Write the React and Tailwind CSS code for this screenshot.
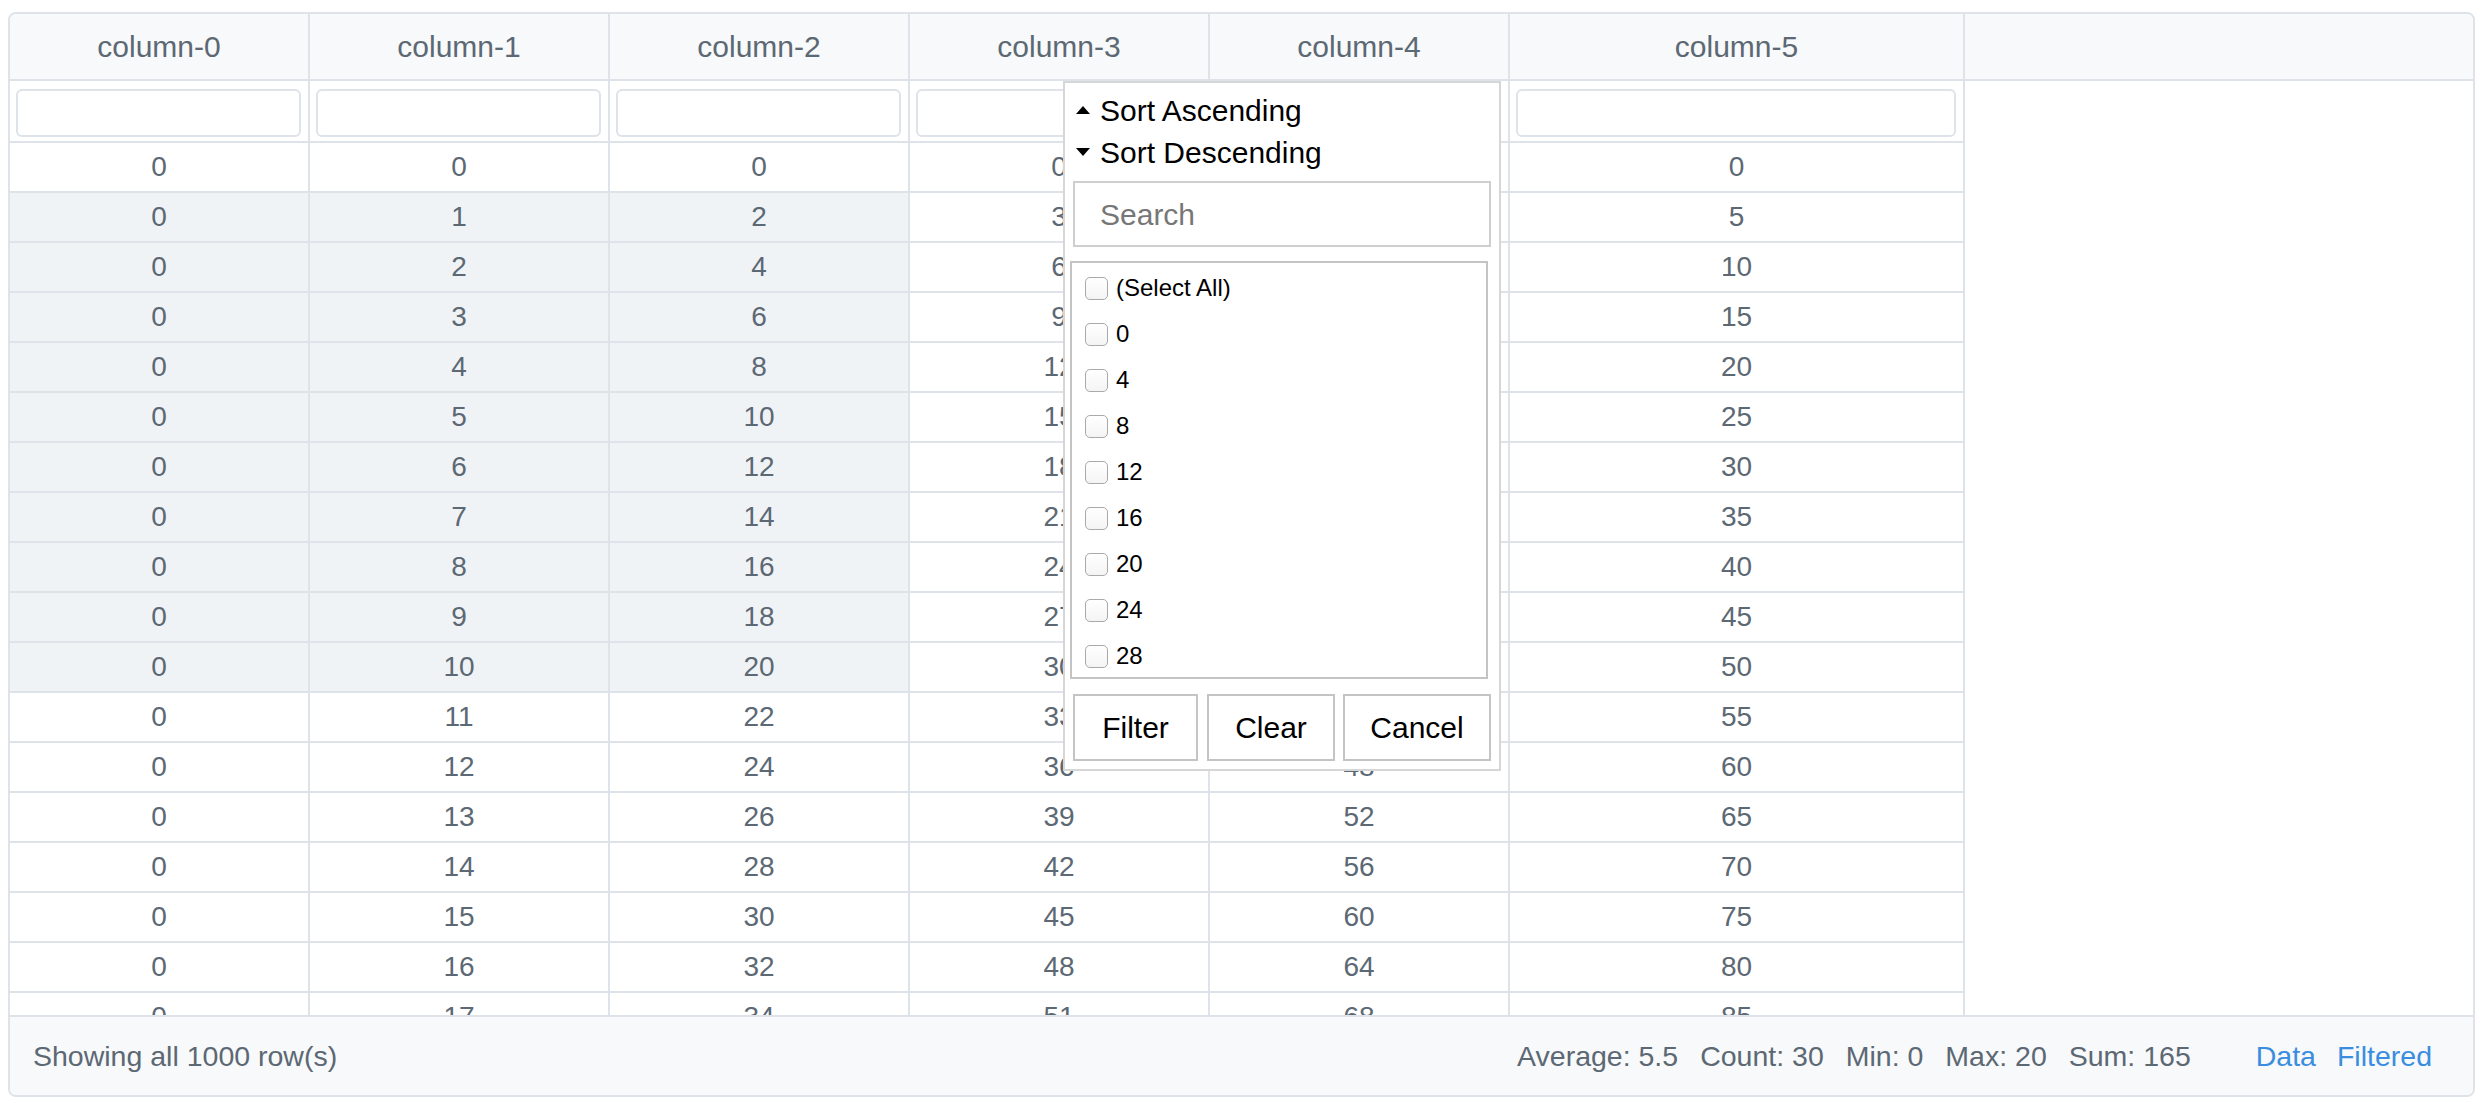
import React from "react";

const columns = ["column-0", "column-1", "column-2", "column-3", "column-4", "column-5"];
const rows = Array.from({ length: 18 }, (_, i) => [0, i, i * 2, i * 3, i * 4, i * 5]);
const listValues = ["(Select All)", "0", "4", "8", "12", "16", "20", "24", "28"];

const colWidth = (idx) => (idx === 5 ? "w-[455px]" : "w-[300px]");

function Checkbox() {
  return (
    <span className="inline-block w-[23px] h-[23px] rounded-[5px] border-[1.5px] border-[#a9a9a9] bg-gradient-to-b from-white to-[#f4f4f4] shrink-0"></span>
  );
}

function FilterPopup() {
  return (
    <div className="absolute left-[1053px] top-[67px] w-[438px] h-[690px] bg-white border-2 border-[#d6d6d6] text-black z-10">
      <div className="pt-[6px] pl-[11px]">
        <div className="h-[42px] flex items-center gap-[10px] text-[30px]">
          <svg width="14" height="8" viewBox="0 0 14 8"><polygon points="7,0 14,8 0,8" fill="#000" /></svg>
          <span>Sort Ascending</span>
        </div>
        <div className="h-[42px] flex items-center gap-[10px] text-[30px]">
          <svg width="14" height="8" viewBox="0 0 14 8"><polygon points="0,0 14,0 7,8" fill="#000" /></svg>
          <span>Sort Descending</span>
        </div>
      </div>
      <div className="mt-[8px] mx-[8px] h-[66px] border-2 border-[#cfcfcf] flex items-center pl-[25px] text-[30px] text-[#777]">
        Search
      </div>
      <div className="mt-[14px] ml-[5px] w-[418px] h-[418px] border-2 border-[#c4c4c4] overflow-hidden pt-[2px] pl-[13px]">
        {listValues.map((v) => (
          <div key={v} className="h-[46px] flex items-center gap-[8px] text-[24px]">
            <Checkbox />
            <span>{v}</span>
          </div>
        ))}
      </div>
      <div className="mt-[15px] ml-[8px] flex text-[30px]">
        <div className="w-[125px] h-[67px] border-2 border-[#c4c4c4] flex items-center justify-center">Filter</div>
        <div className="ml-[9px] w-[128px] h-[67px] border-2 border-[#c4c4c4] flex items-center justify-center">Clear</div>
        <div className="ml-[8px] w-[148px] h-[67px] border-2 border-[#c4c4c4] flex items-center justify-center">Cancel</div>
      </div>
    </div>
  );
}

export default function App() {
  return (
    <div className="w-[2484px] h-[1110px] bg-white font-['Liberation_Sans',Arial,sans-serif] text-[#5c6873] pt-[12px] pl-[8px]">
      <div className="relative w-[2467px] h-[1085px] border-2 border-[#dde3e8] rounded-[8px] overflow-hidden flex flex-col bg-white">
        {/* header */}
        <div className="h-[67px] flex bg-[#f7f9fa] border-b-2 border-[#dde3e8] shrink-0">
          {columns.map((c, idx) => (
            <div key={c} className={`${colWidth(idx)} border-r-2 border-[#dde3e8] flex items-center justify-center text-[30px]`}>
              {c}
            </div>
          ))}
          <div className="flex-1"></div>
        </div>

        {/* body */}
        <div className="flex-1 overflow-hidden">
          <div className="flex h-[62px]">
            {columns.map((c, idx) => (
              <div key={c} className={`${colWidth(idx)} border-r-2 border-b-2 border-[#dde3e8] pt-[8px] pl-[6px] pr-[7px]`}>
                <div className="h-[48px] w-full rounded-[6px] border-2 border-[#dde3e8] bg-white"></div>
              </div>
            ))}
          </div>
          {rows.map((r, ri) => (
            <div key={ri} className="flex h-[50px]">
              {r.map((v, ci) => (
                <div
                  key={ci}
                  className={`${colWidth(ci)} border-r-2 border-b-2 border-[#dde3e8] flex items-center justify-center text-[28px] ${ri >= 1 && ri <= 10 && ci <= 2 ? "bg-[#f0f3f6]" : "bg-white"}`}
                >
                  {v}
                </div>
              ))}
            </div>
          ))}
        </div>

        {/* footer */}
        <div className="h-[80px] shrink-0 border-t-2 border-[#dde3e8] bg-[#f7f9fa] flex items-center justify-between pl-[23px] pr-[41px] text-[28.5px]">
          <span>Showing all 1000 row(s)</span>
          <div className="flex items-center">
            <div className="flex gap-[22px]">
              <span>Average: 5.5</span>
              <span>Count: 30</span>
              <span>Min: 0</span>
              <span>Max: 20</span>
              <span>Sum: 165</span>
            </div>
            <div className="flex gap-[21px] ml-[65px] text-[#3a8ddf]">
              <span>Data</span>
              <span>Filtered</span>
            </div>
          </div>
        </div>

        <FilterPopup />
      </div>
    </div>
  );
}
